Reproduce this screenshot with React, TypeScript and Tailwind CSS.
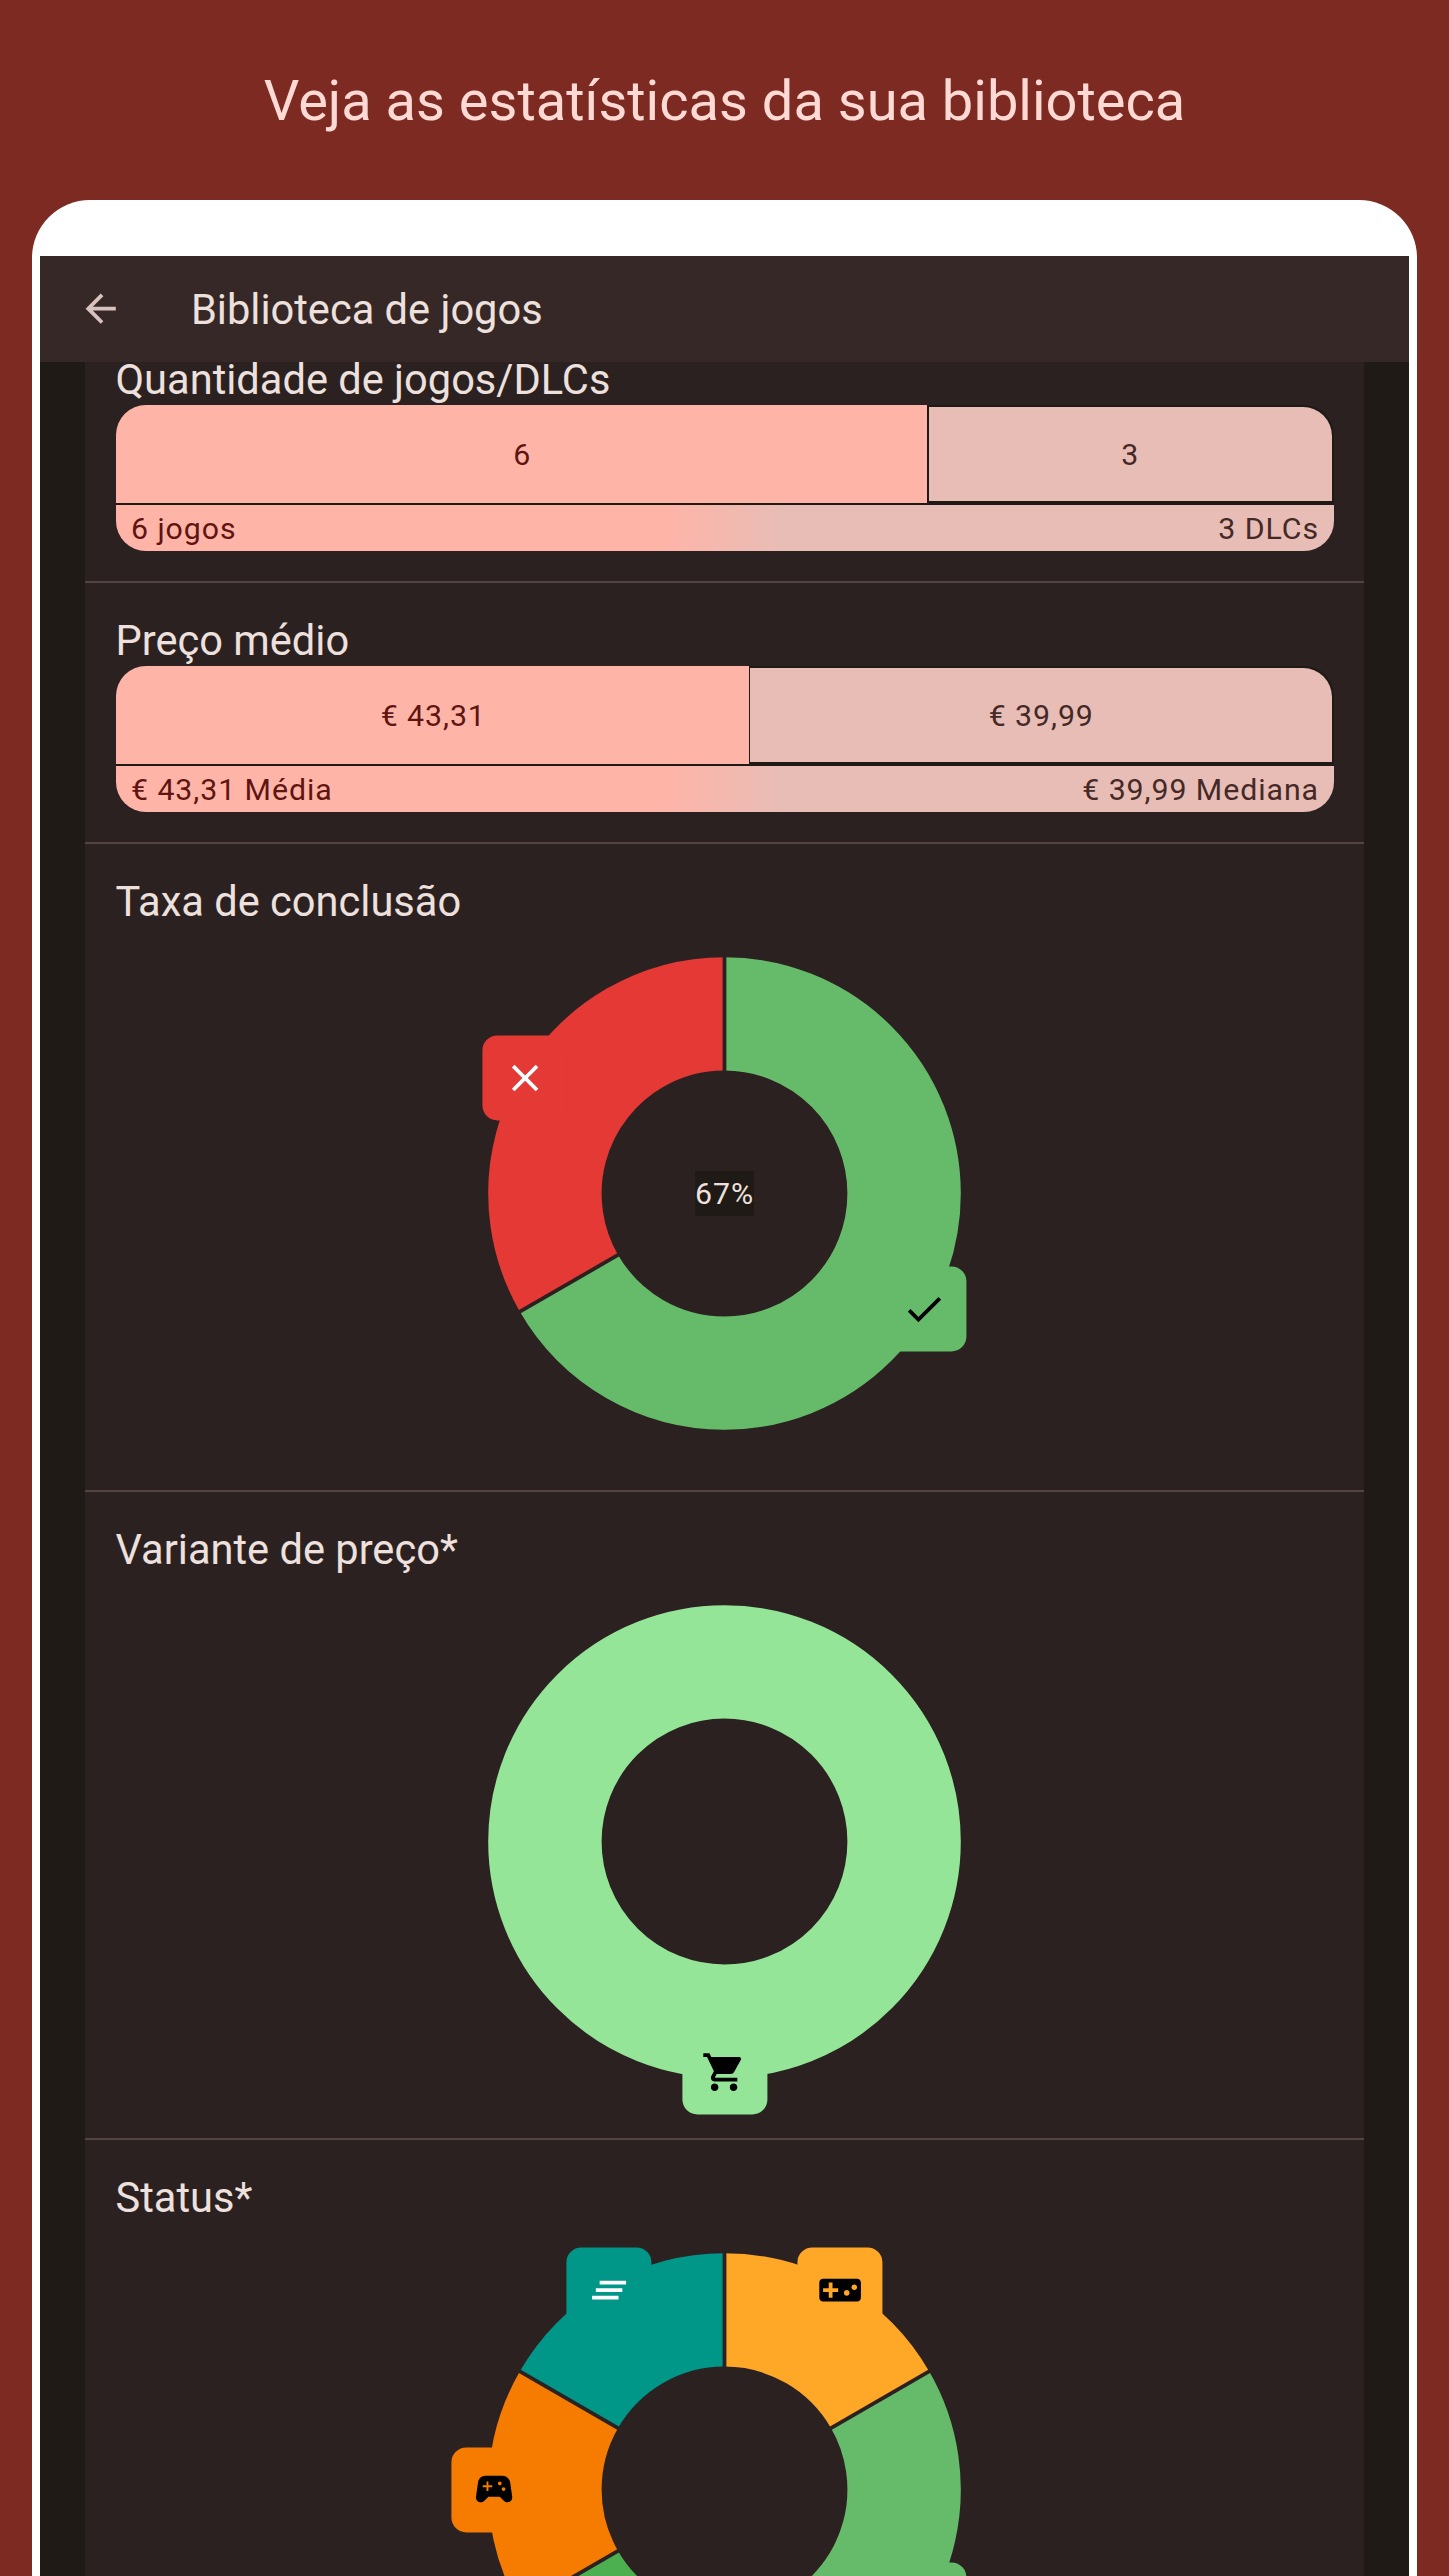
import type { ReactNode } from "react";
import type { IconType } from "react-icons";
import {
  MdArrowBack,
  MdCheck,
  MdClearAll,
  MdClose,
  MdDoneAll,
  MdShoppingCart,
  MdSportsEsports,
  MdVideogameAsset,
} from "react-icons/md";

type Slice = { value: number; color: string; icon: IconType; iconColor: string };

const OUTER = 236.3;
const INNER = 122.9;
const BADGE_ORBIT = 230.4;

function Donut({ slices, label }: { slices: Slice[]; label?: string }) {
  const total = slices.reduce((sum, s) => sum + s.value, 0);
  const mid = (OUTER + INNER) / 2;
  const circumference = 2 * Math.PI * mid;
  let cursor = 0;
  const arcs = slices.map((s) => {
    const start = cursor / total;
    cursor += s.value;
    return { ...s, start, share: s.value / total };
  });

  return (
    <div className="relative mx-auto flex size-[533px] items-center justify-center">
      <svg viewBox="-266.5 -266.5 533 533" className="absolute inset-0 size-full">
        {arcs.map((a, i) => (
          <circle
            key={i}
            r={mid}
            fill="none"
            stroke={a.color}
            strokeWidth={OUTER - INNER}
            strokeDasharray={arcs.length > 1 ? `${a.share * circumference} ${circumference}` : undefined}
            transform={`rotate(${a.start * 360 - 90})`}
          />
        ))}
        {arcs.length > 1 &&
          arcs.map((a, i) => (
            <line
              key={i}
              y1={-INNER + 3}
              y2={-OUTER - 3}
              stroke="#2b2121"
              strokeWidth="3.8"
              transform={`rotate(${a.start * 360})`}
            />
          ))}
      </svg>
      {arcs.map((a, i) => {
        const angle = (a.start + a.share / 2) * 2 * Math.PI;
        const Icon = a.icon;
        return (
          <div
            key={i}
            className="absolute flex size-[85.2px] -translate-1/2 items-center justify-center rounded-[15px]"
            style={{
              left: 266.5 + BADGE_ORBIT * Math.sin(angle),
              top: 266.5 - BADGE_ORBIT * Math.cos(angle),
              backgroundColor: a.color,
              color: a.iconColor,
            }}
          >
            <Icon className="size-[45.4px]" />
          </div>
        );
      })}
      {label && (
        <span className="relative bg-[#201a17] text-[30.27px] leading-[45.4px] tracking-[0.946px]">{label}</span>
      )}
    </div>
  );
}

type Part = { value: number; text: string; legend: string };

function SplitBar({ left, right }: { left: Part; right: Part }) {
  return (
    <div className="overflow-hidden rounded-[30px] text-[30.27px] tracking-[0.946px]">
      <div className="flex h-[98px] overflow-hidden bg-[#201a17]">
        <div
          className="flex min-w-0 basis-0 items-center justify-center bg-[#ffb4a8] pt-[2px] pl-[2px] text-[#601410]"
          style={{ flexGrow: left.value }}
        >
          {left.text}
        </div>
        <div className="flex min-w-0 basis-0 py-[2px] pr-[1.5px]" style={{ flexGrow: right.value }}>
          <div className="ml-[1.5px] flex flex-1 items-center justify-center rounded-tr-[29px] bg-[#e7bdb6] pt-[2px] text-[#442926]">
            {right.text}
          </div>
        </div>
      </div>
      <div className="h-[2px] bg-[#201a17]" />
      <div className="flex h-[46px] items-center justify-between bg-linear-to-r from-[#ffb4a8] from-45% to-[#e7bdb6] to-55% pt-[2px] pr-[14.5px] pl-[15.5px]">
        <span className="text-[#601410]">{left.legend}</span>
        <span className="text-[#442926]">{right.legend}</span>
      </div>
    </div>
  );
}

function Section({ title, children }: { title: string; children: ReactNode }) {
  return (
    <section className="px-[30.5px] py-[30px]">
      <h2 className="h-[53px] pt-[2px] text-[41.6px] leading-[51px]">{title}</h2>
      {children}
    </section>
  );
}

export default function App() {
  return (
    <div className="flex h-[2576px] w-[1449px] flex-col overflow-hidden bg-[#7d2b22] font-[Roboto,sans-serif] text-[#ede0dd]">
      <h1 className="flex h-[200px] shrink-0 items-center justify-center pt-px text-[56px] text-[#ffdad4]">
        Veja as estatísticas da sua biblioteca
      </h1>
      <div className="mx-8 flex min-h-0 flex-1 flex-col rounded-t-[58px] bg-white px-2 pt-2">
        <div className="flex min-h-0 flex-1 flex-col overflow-hidden rounded-t-[50px]">
          <header className="mt-12 flex h-[106px] shrink-0 items-center bg-[#352826] pl-[37.5px]">
            <MdArrowBack className="size-[45.4px] text-[#d8c2be]" />
            <span className="ml-[68px] text-[41.6px] leading-[53px]">Biblioteca de jogos</span>
          </header>
          <div className="flex min-h-0 flex-1 flex-col bg-[#201a17] px-[45px]">
            <main className="min-h-0 flex-1 bg-[#2b2121]">
              <div className="-mt-10 divide-y-2 divide-[#534341]">
                <Section title="Quantidade de jogos/DLCs">
                  <SplitBar
                    left={{ value: 6, text: "6", legend: "6 jogos" }}
                    right={{ value: 3, text: "3", legend: "3 DLCs" }}
                  />
                </Section>
                <Section title="Preço médio">
                  <SplitBar
                    left={{ value: 43.31, text: "€ 43,31", legend: "€ 43,31 Média" }}
                    right={{ value: 39.99, text: "€ 39,99", legend: "€ 39,99 Mediana" }}
                  />
                </Section>
                <Section title="Taxa de conclusão">
                  <Donut
                    label="67%"
                    slices={[
                      { value: 4, color: "#66bb6a", icon: MdCheck, iconColor: "#000000" },
                      { value: 2, color: "#e53935", icon: MdClose, iconColor: "#ffffff" },
                    ]}
                  />
                </Section>
                <Section title="Variante de preço*">
                  <Donut slices={[{ value: 6, color: "#94e597", icon: MdShoppingCart, iconColor: "#000000" }]} />
                </Section>
                <Section title="Status*">
                  <Donut
                    slices={[
                      { value: 1, color: "#ffa726", icon: MdVideogameAsset, iconColor: "#000000" },
                      { value: 2, color: "#66bb6a", icon: MdCheck, iconColor: "#000000" },
                      { value: 1, color: "#4caf50", icon: MdDoneAll, iconColor: "#000000" },
                      { value: 1, color: "#f57c00", icon: MdSportsEsports, iconColor: "#000000" },
                      { value: 1, color: "#009688", icon: MdClearAll, iconColor: "#ffffff" },
                    ]}
                  />
                </Section>
              </div>
            </main>
          </div>
        </div>
      </div>
    </div>
  );
}
